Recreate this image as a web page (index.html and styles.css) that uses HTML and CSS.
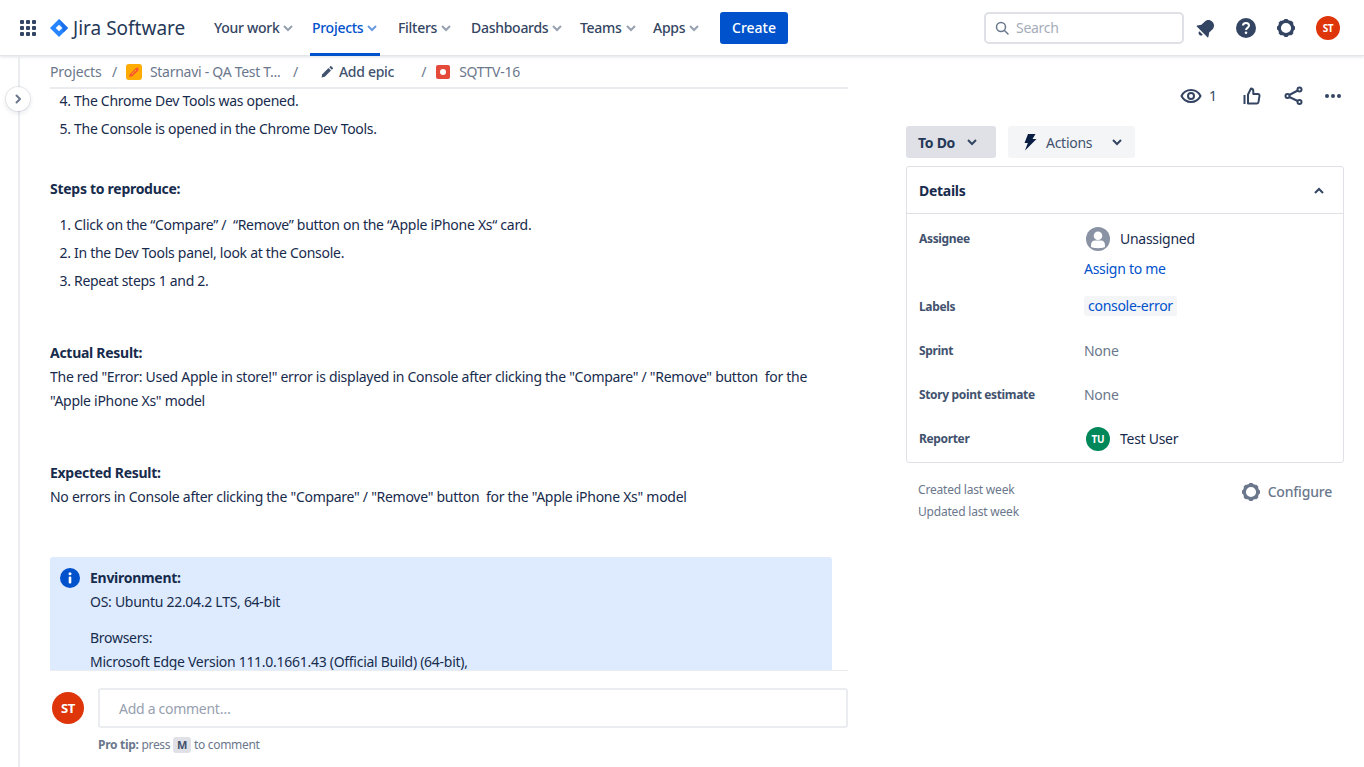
FILE: index.html
```html
<!DOCTYPE html>
<html lang="en">
<head>
  <meta charset="UTF-8">
  <title>SQTTV-16 - Jira</title>
  <link rel="stylesheet" href="styles.css">
</head>
<body>
  <header class="topbar">
    <div class="grid-icon"><i></i><i></i><i></i><i></i><i></i><i></i><i></i><i></i><i></i></div>
    <div class="logo">
      <svg width="18" height="18" viewBox="0 0 18 18"><path d="M9 0l9 9-9 9-9-9z" fill="#2684ff"/><path d="M9 0l9 9-4.500 4.500-1-5z" fill="#1a6fe8"/><path d="M9 5.700L12.300 9 9 12.300 5.700 9z" fill="#fff"/></svg>
      <span>Jira Software</span>
    </div>
    <nav class="nav">
      <a class="nav-item w-work">Your work<svg class="chev" viewBox="0 0 12 8"><path d="M2 2l4 4 4-4"/></svg></a>
      <a class="nav-item active w-projects">Projects<svg class="chev" viewBox="0 0 12 8"><path d="M2 2l4 4 4-4"/></svg></a>
      <a class="nav-item w-filters">Filters<svg class="chev" viewBox="0 0 12 8"><path d="M2 2l4 4 4-4"/></svg></a>
      <a class="nav-item w-dash">Dashboards<svg class="chev" viewBox="0 0 12 8"><path d="M2 2l4 4 4-4"/></svg></a>
      <a class="nav-item w-teams">Teams<svg class="chev" viewBox="0 0 12 8"><path d="M2 2l4 4 4-4"/></svg></a>
      <a class="nav-item w-apps">Apps<svg class="chev" viewBox="0 0 12 8"><path d="M2 2l4 4 4-4"/></svg></a>
    </nav>
    <button class="create">Create</button>
    <div class="search">
      <svg width="16" height="16" viewBox="0 0 16 16" fill="none" stroke="#6b778c" stroke-width="1.500"><circle cx="7" cy="7" r="4.500"/><path d="M10.500 10.500L14 14" stroke-linecap="round"/></svg>
      <span>Search</span>
    </div>
    <div class="top-icons">
      <svg width="24" height="24" viewBox="0 0 24 24" fill="#344563"><g transform="rotate(45 12 12)"><path d="M12 3c-3.300 0-5.500 2.500-5.500 5.500v4.500L4 16.500c-.3.500 0 1 .5 1h15c.5 0 .8-.5.5-1L17.500 13V8.500C17.500 5.500 15.300 3 12 3z"/><path d="M9.500 19h5a2.500 2.500 0 0 1-5 0z"/></g></svg>
      <svg width="24" height="24" viewBox="0 0 24 24"><circle cx="12" cy="12" r="10" fill="#344563"/><path d="M9 9.500C9 7.800 10.300 7 12 7s3 1 3 2.600c0 2.200-3 2.300-3 4.400" fill="none" stroke="#fff" stroke-width="2"/><circle cx="12" cy="16.700" r="1.300" fill="#fff"/></svg>
      <svg width="24" height="24" viewBox="0 0 24 24"><circle cx="12" cy="12" r="6.700" fill="none" stroke="#344563" stroke-width="3.200"/><g fill="#344563"><rect x="10" y="3" width="4" height="3" rx="1"/><rect x="10" y="18" width="4" height="3" rx="1"/><rect x="3" y="10" width="3" height="4" rx="1"/><rect x="18" y="10" width="3" height="4" rx="1"/><rect x="10" y="3" width="4" height="3" rx="1" transform="rotate(45 12 12)"/><rect x="10" y="3" width="4" height="3" rx="1" transform="rotate(135 12 12)"/><rect x="10" y="3" width="4" height="3" rx="1" transform="rotate(225 12 12)"/><rect x="10" y="3" width="4" height="3" rx="1" transform="rotate(315 12 12)"/></g></svg>
      <div class="avatar small red top-avatar">ST</div>
    </div>
  </header>

  <div class="page">
    <aside class="rail">
      <button class="rail-toggle"><svg width="12" height="12" viewBox="0 0 12 12" fill="none" stroke="#6b778c" stroke-width="2" stroke-linecap="round" stroke-linejoin="round"><path d="M4.500 2.500L8 6 4.500 9.500"/></svg></button>
    </aside>

    <main class="issue">
      <div class="crumbs">
        <span class="crumb-root">Projects</span><span class="sep sep1">/</span>
        <svg class="proj-icon" width="16" height="16" viewBox="0 0 16 16"><rect width="16" height="16" rx="3" fill="#ffab00"/><path d="M3 13l1-3 6-6c1-1 2.500-.5 2.500.5s.3 1.600-.5 2.500L6 12.500z" fill="#ff5630"/><path d="M6 10l1.500-1.500M8.500 7.500L10 6" stroke="#ffc400" stroke-width="1"/></svg>
        <span class="proj-name">Starnavi - QA Test T...</span><span class="sep sep2">/</span>
        <span class="epic"><svg width="12" height="12" viewBox="0 0 12 12" fill="#42526e"><path d="M.5 11.500l.8-3.300L7.500 2l2.500 2.500-6.200 6.200z"/><path d="M8.300 1.200l1-1c.3-.3.600-.3.900 0l1.600 1.600c.3.300.3.600 0 .9l-1 1z"/></svg>Add epic</span>
        <span class="sep sep3">/</span>
        <svg class="bug-icon" width="14" height="14" viewBox="0 0 14 14"><rect width="14" height="14" rx="2" fill="#e5493a"/><circle cx="7" cy="7" r="3" fill="#fff"/></svg>
        <span>SQTTV-16</span>
      </div>
      <div class="scroll">
        <ol class="steps" start="4">
          <li>The Chrome Dev Tools was opened.</li>
          <li>The Console is opened in the Chrome Dev Tools.</li>
        </ol>
        <p class="gap-36"><b>Steps to reproduce:</b></p>
        <ol class="steps list-top">
          <li>Click on the “Compare” /&nbsp; “Remove” button on the “Apple iPhone Xs“ card.</li>
          <li>In the Dev Tools panel, look at the Console.</li>
          <li>Repeat steps 1 and 2.</li>
        </ol>
        <p class="gap-48"><b>Actual Result:</b></p>
        <p class="wrap-text">The red "Error: Used Apple in store!" error is displayed in Console after clicking the "Compare" / "Remove" button&nbsp; for the "Apple iPhone Xs" model</p>
        <p class="gap-48"><b>Expected Result:</b></p>
        <p>No errors in Console after clicking the "Compare" / "Remove" button&nbsp; for the "Apple iPhone Xs" model</p>
        <div class="info-panel">
          <svg width="20" height="20" viewBox="0 0 20 20"><circle cx="10" cy="10" r="10" fill="#0052cc"/><circle cx="10" cy="5.800" r="1.500" fill="#fff"/><rect x="8.700" y="8.500" width="2.600" height="7" rx="1" fill="#fff"/></svg>
          <div>
            <p><b>Environment:</b></p>
            <p>OS: Ubuntu 22.04.2 LTS, 64-bit</p>
            <p class="browsers">Browsers:</p>
            <p>Microsoft Edge Version 111.0.1661.43 (Official Build) (64-bit),</p>
          </div>
        </div>
      </div>
      <div class="comment">
        <div class="avatar big red">ST</div>
        <div class="comment-body">
          <div class="comment-input">Add a comment…</div>
          <div class="tip"><b>Pro tip:</b> press <kbd>M</kbd> to comment</div>
        </div>
      </div>
    </main>

    <section class="side">
      <div class="social">
        <svg width="24" height="24" viewBox="0 0 24 24" fill="none" stroke="#344563" stroke-width="2"><path d="M2.500 12C4.500 8 8 6 12 6s7.500 2 9.500 6c-2 4-5.500 6-9.500 6s-7.500-2-9.500-6z"/><circle cx="12" cy="12" r="3"/></svg>
        <span class="watch-count">1</span>
        <svg class="thumb" width="18" height="18" viewBox="0 0 18 18" fill="none" stroke="#344563" stroke-width="2" stroke-linejoin="round"><path d="M1.500 8v9"/><path d="M5 16.500V7.500L8 1.500c1.500 0 2.300 1 2.300 2.500v3H15c1 0 1.700.9 1.500 1.900l-1 6c-.2.800-.8 1.600-1.800 1.600z"/></svg>
        <svg class="share" width="20" height="20" viewBox="0 0 20 20" fill="none" stroke="#344563" stroke-width="2"><circle cx="15.500" cy="3.500" r="2"/><circle cx="15.500" cy="16" r="2"/><circle cx="3.500" cy="10" r="2"/><path d="M5.300 9l8.400-4.500M5.300 11l8.400 4"/></svg>
        <svg class="dots" width="18" height="6" viewBox="0 0 18 6" fill="#344563"><circle cx="3" cy="3" r="2"/><circle cx="9" cy="3" r="2"/><circle cx="15" cy="3" r="2"/></svg>
      </div>
      <div class="status-row">
        <button class="status">To Do<svg class="chev2" viewBox="0 0 12 8"><path d="M2 2l4 4 4-4"/></svg></button>
        <button class="actions">
          <svg width="16" height="18" viewBox="0 0 16 18" fill="#091e42"><path d="M6 1h7.500L10.500 6H14.500L3 17.500 5.800 10H2.500z"/></svg>
          <span>Actions</span>
          <svg class="chev2" viewBox="0 0 12 8"><path d="M2 2l4 4 4-4"/></svg>
        </button>
      </div>
      <div class="details">
        <div class="details-head">
          <span>Details</span>
          <svg class="chev2" viewBox="0 0 12 8"><path d="M2 6l4-4 4 4"/></svg>
        </div>
        <div class="field assignee">
          <div class="label">Assignee</div>
          <div class="value">
            <div class="person">
              <svg width="24" height="24" viewBox="0 0 24 24"><circle cx="12" cy="12" r="12" fill="#8993a4"/><circle cx="12" cy="8.800" r="4.300" fill="#fff"/><path d="M5 18.500c0-3.500 1.500-5 4-5h6c2.500 0 4 1.500 4 5V20c-2 .8-4.500 1.200-7 1.200S7 20.800 5 20z" fill="#fff"/></svg>
              <span>Unassigned</span>
            </div>
            <a class="assign">Assign to me</a>
          </div>
        </div>
        <div class="field labels">
          <div class="label">Labels</div>
          <div class="value"><a class="tag">console-error</a></div>
        </div>
        <div class="field plain">
          <div class="label">Sprint</div>
          <div class="value muted">None</div>
        </div>
        <div class="field plain">
          <div class="label">Story point estimate</div>
          <div class="value muted">None</div>
        </div>
        <div class="field reporter">
          <div class="label">Reporter</div>
          <div class="value">
            <div class="person"><div class="avatar small green">TU</div><span>Test User</span></div>
          </div>
        </div>
      </div>
      <div class="meta">
        <div class="dates">
          <div>Created last week</div>
          <div>Updated last week</div>
        </div>
        <div class="configure">
          <svg width="24" height="24" viewBox="0 0 24 24"><circle cx="12" cy="12" r="6.700" fill="none" stroke="#6b778c" stroke-width="3.200"/><g fill="#6b778c"><rect x="10" y="3" width="4" height="3" rx="1"/><rect x="10" y="18" width="4" height="3" rx="1"/><rect x="3" y="10" width="3" height="4" rx="1"/><rect x="18" y="10" width="3" height="4" rx="1"/><rect x="10" y="3" width="4" height="3" rx="1" transform="rotate(45 12 12)"/><rect x="10" y="3" width="4" height="3" rx="1" transform="rotate(135 12 12)"/><rect x="10" y="3" width="4" height="3" rx="1" transform="rotate(225 12 12)"/><rect x="10" y="3" width="4" height="3" rx="1" transform="rotate(315 12 12)"/></g></svg>
          <span>Configure</span>
        </div>
      </div>
    </section>
  </div>
</body>
</html>
```

FILE: styles.css
```css
* {
  box-sizing: border-box;
}
html, body {
  height: 100%;
  margin: 0;
  overflow: hidden;
}
body {
  font-family: "Noto Sans", sans-serif;
  font-size: 14px;
  line-height: 24px;
  letter-spacing: -0.28px;
  color: #172b4d;
  background-color: #fff;
}
p {
  margin: 0;
}
button {
  font-family: inherit;
  letter-spacing: inherit;
  border: none;
  cursor: pointer;
}

/* top bar */
.topbar {
  display: flex;
  align-items: center;
  height: 56px;
  padding-left: 20px;
  border-bottom: 1px solid #e3e5e9;
  box-shadow: 0 1px 3px rgba(9,30,66,0.13);
  position: relative;
}
.grid-icon {
  display: grid;
  grid-template-columns: repeat(3, 4px);
  gap: 2px;
  width: 16px;
}
.grid-icon i {
  height: 4px;
  border-radius: 1px;
  background-color: #344563;
}
.logo {
  display: flex;
  align-items: center;
  gap: 5px;
  margin-left: 14px;
  width: 162px;
  color: #253858;
  font-size: 19px;
  letter-spacing: 0;
}
.nav {
  display: flex;
  height: 56px;
}
.nav-item {
  display: flex;
  align-items: center;
  gap: 3px;
  padding: 3px 0 0 2px;
  color: #344563;
  font-weight: 500;
  border-bottom: 3px solid transparent;
}
.nav-item.active {
  color: #0052cc;
  border-bottom-color: #0052cc;
}
.w-work { width: 98px; }
.w-projects { width: 70px; margin-right: 16px; }
.w-filters { width: 73px; }
.w-dash { width: 109px; }
.w-teams { width: 73px; }
.w-apps { width: 69px; }
.chev {
  width: 12px;
  height: 8px;
  fill: none;
  stroke: #97a0af;
  stroke-width: 2;
}
.active .chev {
  stroke: #6b9be0;
}
.create {
  width: 68px;
  height: 32px;
  background-color: #0052cc;
  color: #fff;
  font-size: 14px;
  font-weight: 500;
  letter-spacing: 0;
  border-radius: 3px;
}
.search {
  display: flex;
  align-items: center;
  gap: 6px;
  width: 200px;
  height: 32px;
  margin-left: 196px;
  padding-left: 8px;
  border: 2px solid #dfe1e6;
  border-radius: 5px;
  color: #a5adba;
}
.top-icons {
  display: flex;
  align-items: center;
  gap: 16px;
  margin-left: 10px;
}
.top-avatar { margin-left: 2px; }
.avatar {
  display: flex;
  align-items: center;
  justify-content: center;
  border-radius: 50%;
  color: #fff;
  font-weight: 700;
  flex-shrink: 0;
}
.avatar.small {
  width: 24px;
  height: 24px;
  font-size: 10px;
}
.avatar.big {
  width: 32px;
  height: 32px;
  font-size: 13px;
}
.red { background-color: #de350b; }
.green { background-color: #00875a; }

/* page columns */
.page {
  display: flex;
  height: 711px;
}
.rail {
  width: 20px;
  border-right: 2px solid #ebecf0;
  position: relative;
}
.rail-toggle {
  position: absolute;
  left: 6px;
  top: 31px;
  width: 24px;
  height: 24px;
  padding: 0;
  display: flex;
  align-items: center;
  justify-content: center;
  background-color: #fff;
  border-radius: 50%;
  box-shadow: 0 0 0 1px rgba(9,30,66,0.08), 0 2px 4px 1px rgba(9,30,66,0.08);
}

/* issue column */
.issue {
  width: 798px;
  margin-left: 30px;
  display: flex;
  flex-direction: column;
}
.crumbs {
  display: flex;
  align-items: center;
  height: 33px;
  flex-shrink: 0;
  color: #6b778c;
  border-bottom: 2px solid #ebecf0;
}
.crumb-root { width: 52px; letter-spacing: -0.1px; }
.sep {
  margin: 0 10px;
}
.sep1 { margin-right: 9px; }
.proj-name { width: 133px; white-space: nowrap; }
.sep2 { margin-right: 23px; }
.sep3 { margin: 0 10px 0 27px; }
.proj-icon { margin-right: 8px; }
.bug-icon { margin-right: 9px; }
.epic {
  display: flex;
  align-items: center;
  gap: 6px;
  color: #42526e;
  font-weight: 500;
}
.scroll {
  height: 582px;
  overflow: hidden;
  border-bottom: 1px solid #ebecf0;
}
.steps {
  margin: 0;
  padding-left: 24px;
}
.steps li + li {
  margin-top: 4px;
}
.list-top { margin-top: 12px; }
.gap-36 { margin-top: 36px; }
.gap-48 { margin-top: 48px; }
.wrap-text { width: 770px; }
.info-panel {
  display: flex;
  gap: 10px;
  width: 782px;
  margin-top: 48px;
  padding: 9px 10px;
  background-color: #deebff;
  border-radius: 3px;
}
.info-panel svg {
  margin-top: 2px;
  flex-shrink: 0;
}
.browsers { margin-top: 12px; }

/* comment box */
.comment {
  display: flex;
  gap: 14px;
  padding: 17px 0 0 2px;
}
.comment .avatar { margin-top: 4px; }
.comment-body { flex: 1; }
.comment-input {
  height: 40px;
  padding: 0 19px;
  line-height: 38px;
  color: #97a0af;
  border: 2px solid #ebecf0;
  border-radius: 3px;
}
.tip {
  margin-top: 5px;
  font-size: 12px;
  letter-spacing: -0.3px;
  color: #6b778c;
}
kbd {
  display: inline-block;
  width: 18px;
  text-align: center;
  line-height: 16px;
  font-family: inherit;
  font-weight: 700;
  font-size: 11px;
  color: #42526e;
  background-color: #dfe1e6;
  border-radius: 3px;
}

/* right column */
.side {
  width: 438px;
  margin-left: 58px;
}
.social {
  display: flex;
  align-items: center;
  height: 24px;
  margin-top: 28px;
  padding-left: 273px;
  color: #344563;
}
.watch-count {
  margin-left: 6px;
  width: 8px;
  color: #344563;
}
.thumb { margin-left: 26px; }
.share { margin-left: 23px; }
.dots { margin-left: 20px; }
.status-row {
  display: flex;
  gap: 12px;
  margin-top: 18px;
}
.status, .actions {
  display: flex;
  align-items: center;
  height: 32px;
  font-size: 14px;
  border-radius: 3px;
}
.status {
  width: 90px;
  padding-left: 12px;
  gap: 11px;
  font-weight: 700;
  color: #253858;
  background-color: #dfe1e6;
}
.actions {
  width: 127px;
  padding-left: 14px;
  gap: 8px;
  color: #42526e;
  background-color: #f4f5f7;
}
.actions .chev2 { margin-left: 11px; }
.chev2 {
  width: 12px;
  height: 8px;
  fill: none;
  stroke: #344563;
  stroke-width: 2;
}
.details {
  height: 297px;
  margin-top: 8px;
  border: 1px solid #dfe1e6;
  border-radius: 3px;
}
.details-head {
  display: flex;
  align-items: center;
  justify-content: space-between;
  height: 47px;
  padding: 1px 18px 0 12px;
  font-weight: 700;
  border-bottom: 1px solid #dfe1e6;
}
.field {
  display: flex;
  padding-left: 12px;
}
.label {
  width: 165px;
  font-size: 12px;
  font-weight: 700;
  letter-spacing: -0.35px;
  color: #42526e;
}
.value {
  flex: 1;
}
.muted {
  color: #6b778c;
}
.person {
  display: flex;
  align-items: center;
  gap: 10px;
  padding-left: 2px;
}
.assign {
  display: block;
  margin-top: 6px;
  color: #0052cc;
}
.assignee {
  padding-top: 13px;
  height: 81px;
}
.labels { height: 44px; }
.tag {
  display: block;
  width: fit-content;
  margin-top: 1px;
  padding: 0 4px;
  line-height: 20px;
  color: #0052cc;
  background-color: #f4f5f7;
  border-radius: 3px;
}
.plain { height: 44px; }
.meta {
  display: flex;
  justify-content: space-between;
  margin-top: 16px;
  padding: 0 12px;
  font-size: 12px;
  letter-spacing: -0.2px;
  line-height: 22px;
  color: #6b778c;
}
.configure {
  display: flex;
  align-items: center;
  gap: 5px;
  height: 24px;
  margin-top: 1px;
  font-size: 14px;
  font-weight: 500;
  letter-spacing: -0.2px;
}
```
